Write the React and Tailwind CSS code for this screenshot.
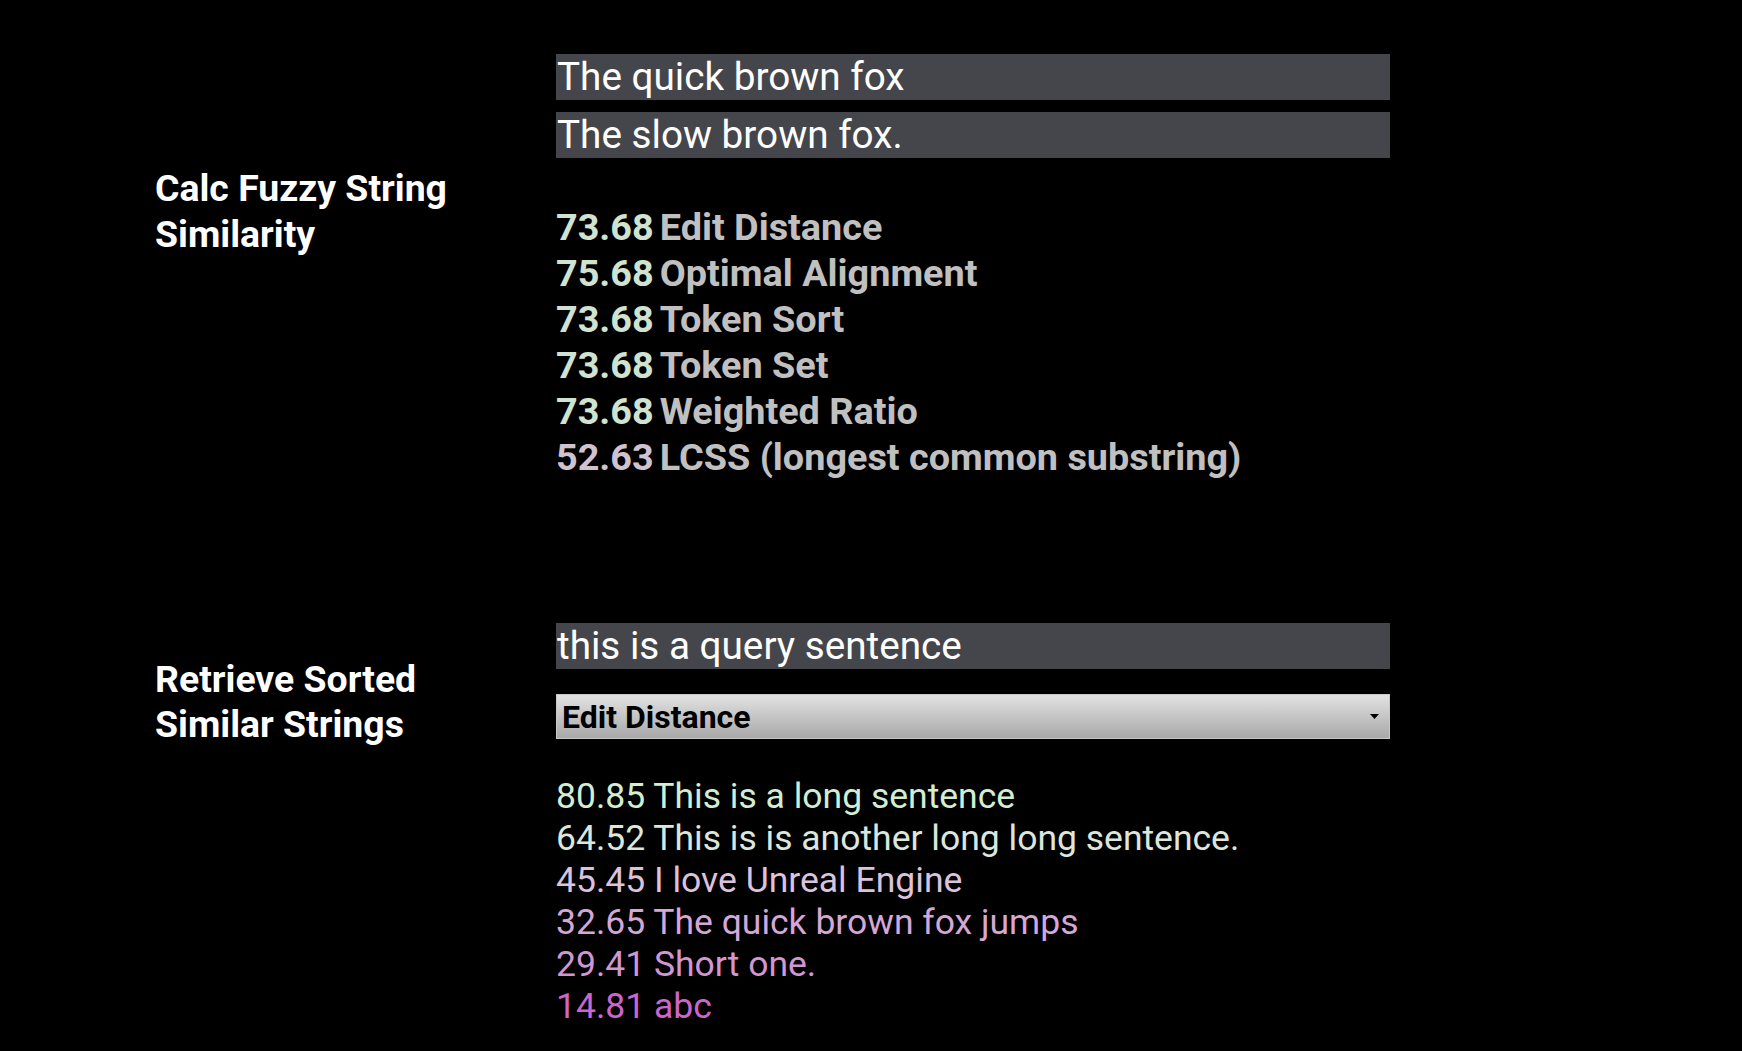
import React, { useState } from "react";

const scores = [
  { value: "73.68", label: "Edit Distance", color: "text-[#d0e2d0]" },
  { value: "75.68", label: "Optimal Alignment", color: "text-[#d0e2d0]" },
  { value: "73.68", label: "Token Sort", color: "text-[#d0e2d0]" },
  { value: "73.68", label: "Token Set", color: "text-[#d0e2d0]" },
  { value: "73.68", label: "Weighted Ratio", color: "text-[#d0e2d0]" },
  { value: "52.63", label: "LCSS (longest common substring)", color: "text-[#cfc3cf]" },
];

const results = [
  { value: "80.85", text: "This is a long sentence", color: "text-[#d2eed2]" },
  { value: "64.52", text: "This is is another long long sentence.", color: "text-[#dce6dc]" },
  { value: "45.45", text: "I love Unreal Engine", color: "text-[#dcc2dc]" },
  { value: "32.65", text: "The quick brown fox jumps", color: "text-[#d6a6d6]" },
  { value: "29.41", text: "Short one.", color: "text-[#d296d2]" },
  { value: "14.81", text: "abc", color: "text-[#cc66cc]" },
];

function TextField({ value, onChange, className = "" }) {
  return (
    <input
      type="text"
      value={value}
      onChange={(e) => onChange(e.target.value)}
      className={`block w-full h-[46px] bg-[#45464b] text-white text-[38.7px] leading-[46px] px-[1px] outline-none ${className}`}
    />
  );
}

export default function App() {
  const [first, setFirst] = useState("The quick brown fox");
  const [second, setSecond] = useState("The slow brown fox.");
  const [query, setQuery] = useState("this is a query sentence");

  return (
    <div className="min-h-screen w-full bg-black font-['Roboto',sans-serif] pl-[155px] pt-[54px]">
      {/* fuzzy similarity */}
      <section className="flex">
        <h2 className="w-[401px] shrink-0 pt-[111px] text-white font-bold text-[37.4px] leading-[46px]">
          Calc Fuzzy String
          <br />
          Similarity
        </h2>
        <div className="w-[834px]">
          <TextField value={first} onChange={setFirst} />
          <TextField value={second} onChange={setSecond} className="mt-[12px]" />
          <div className="mt-[46px]">
            {scores.map((s, i) => (
              <div key={i} className="flex gap-[6px] font-bold text-[37.8px] leading-[46px]">
                <span className={s.color}>{s.value}</span>
                <span className="text-[#c0c0c0]">{s.label}</span>
              </div>
            ))}
          </div>
        </div>
      </section>

      {/* sorted similar strings */}
      <section className="flex mt-[143px]">
        <h2 className="w-[401px] shrink-0 pt-[34px] text-white font-bold text-[37.4px] leading-[45px]">
          Retrieve Sorted
          <br />
          Similar Strings
        </h2>
        <div className="w-[834px]">
          <TextField value={query} onChange={setQuery} />
          <button className="mt-[25px] flex items-center justify-between w-full h-[45px] pl-[5px] pr-[10px] bg-gradient-to-b from-[#e2e2e2] to-[#a9a9a9] border border-[#c8c8c8] text-black font-bold text-[32px] leading-none">
            <span>Edit Distance</span>
            <svg width="9" height="5" viewBox="0 0 9 5">
              <path d="M0 0h9L4.5 5z" fill="#000" />
            </svg>
          </button>
          <div className="mt-[36px]">
            {results.map((r, i) => (
              <div key={i} className={`text-[35.5px] leading-[42px] ${r.color}`}>
                {r.value} {r.text}
              </div>
            ))}
          </div>
        </div>
      </section>
    </div>
  );
}
